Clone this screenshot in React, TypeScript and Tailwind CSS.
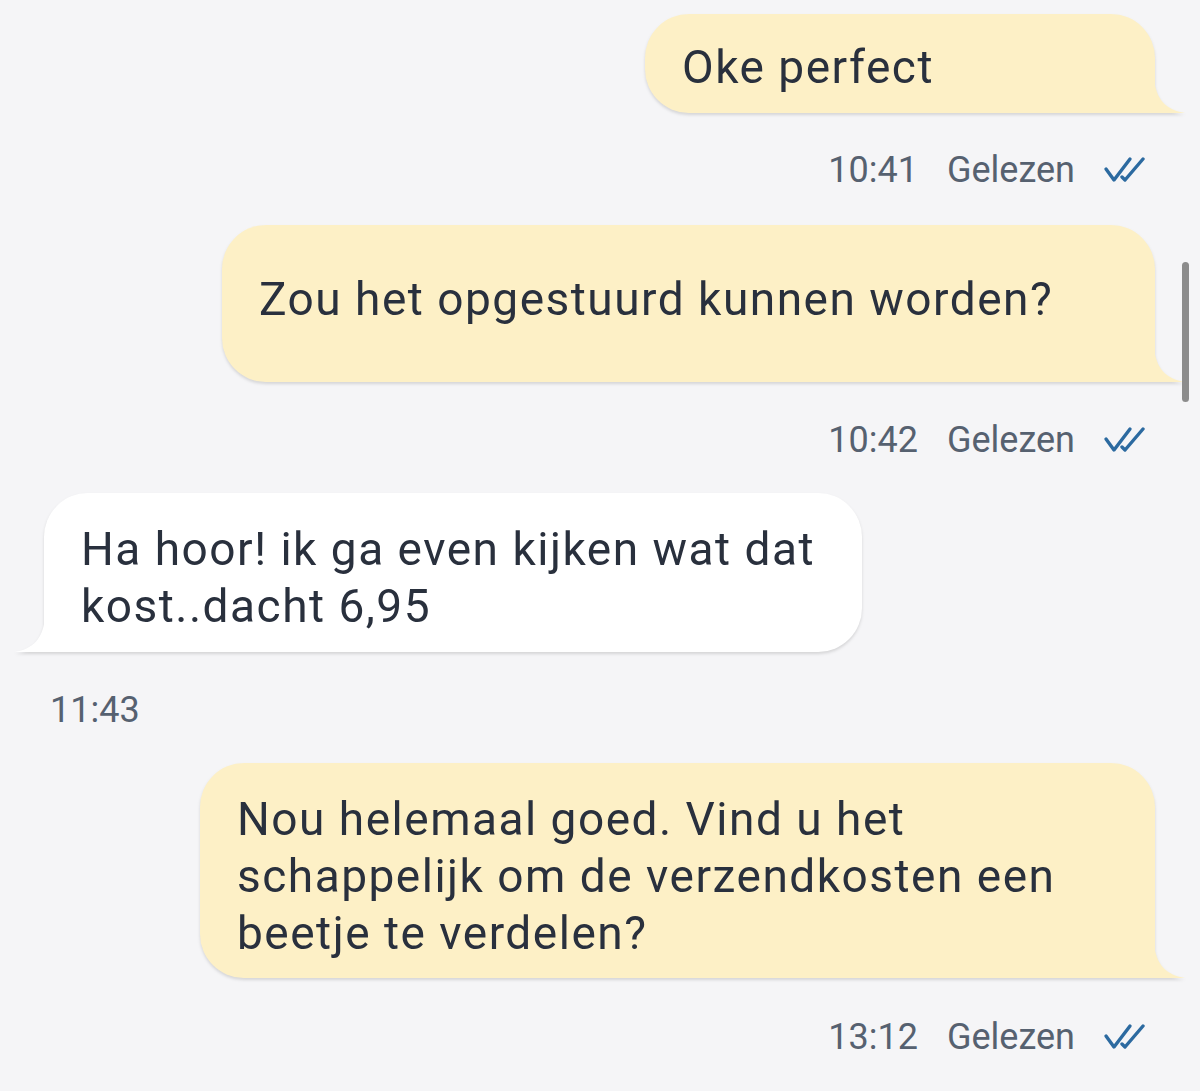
import React from "react";

const Check = () => (
  <svg width="42" height="28" viewBox="0 0 42 28" fill="none" stroke="#2c6aa0" strokeWidth="3.4" strokeLinecap="round" strokeLinejoin="round">
    <path d="M3 13 L11 24 L27 3" />
    <path d="M19 21 L22 24 L40 3" />
  </svg>
);

function Meta({ time, read = true, mt }: { time: string; read?: boolean; mt: string }) {
  return (
    <div className={`flex justify-end items-center pr-[55px] h-[40px] ${mt} text-[36px] leading-[40px] text-[#566170]`}>
      <span>{time}</span>
      {read && <span className="ml-[29px]">Gelezen</span>}
      {read && (
        <span className="ml-[28px] flex items-center">
          <Check />
        </span>
      )}
    </div>
  );
}

function Out({ children, w, pad, mt }: { children: React.ReactNode; w: string; pad: string; mt: string }) {
  return (
    <div className={`flex justify-end pr-[45px] ${mt}`}>
      <div className="relative drop-shadow-[0_2px_1.5px_rgba(0,0,0,0.13)]">
        <div className={`bg-[#fdf0c6] rounded-[44px] rounded-br-none pl-[37px] pr-[20px] ${pad} ${w} text-[46px] leading-[57px] tracking-[1.5px] text-[#29303d]`}>
          {children}
        </div>
        <svg className="absolute bottom-0 right-[-30px]" width="31" height="34" viewBox="0 0 31 34">
          <path d="M0 0 C2 20 12 31 31 34 L0 34 Z" fill="#fdf0c6" />
        </svg>
      </div>
    </div>
  );
}

function In({ children, w, pad, mt }: { children: React.ReactNode; w: string; pad: string; mt: string }) {
  return (
    <div className={`flex justify-start pl-[44px] ${mt}`}>
      <div className="relative drop-shadow-[0_2px_1.5px_rgba(0,0,0,0.13)]">
        <div className={`bg-white rounded-[44px] rounded-bl-none pl-[37px] pr-[20px] ${pad} ${w} text-[46px] leading-[57px] tracking-[1.5px] text-[#29303d]`}>
          {children}
        </div>
        <svg className="absolute bottom-0 left-[-29px]" width="30" height="34" viewBox="0 0 30 34">
          <path d="M30 0 C28 20 18 31 0 34 L30 34 Z" fill="#ffffff" />
        </svg>
      </div>
    </div>
  );
}

export default function App() {
  return (
    <div className="relative w-[1200px] h-[1091px] overflow-hidden bg-[#f5f5f7] font-['Roboto',_sans-serif]">
      <div className="flex flex-col">
        <Out w="w-[510px]" pad="pt-[25px] pb-[17px]" mt="mt-[14px]">
          Oke perfect
        </Out>
        <Meta time="10:41" mt="mt-[37px]" />
        <Out w="w-[933px]" pad="pt-[46px] pb-[54px]" mt="mt-[35px]">
          Zou het opgestuurd kunnen worden?
        </Out>
        <Meta time="10:42" mt="mt-[38px]" />
        <In w="w-[818px]" pad="pt-[28px] pb-[17px]" mt="mt-[33px]">
          Ha hoor! ik ga even kijken wat dat
          <br />
          kost..dacht 6,95
        </In>
        <div className="mt-[38px] h-[40px] pl-[50px] text-[36px] leading-[40px] text-[#566170]">11:43</div>
        <Out w="w-[955px]" pad="pt-[28px] pb-[16px]" mt="mt-[33px]">
          Nou helemaal goed. Vind u het
          <br />
          schappelijk om de verzendkosten een
          <br />
          beetje te verdelen?
        </Out>
        <Meta time="13:12" mt="mt-[39px]" />
      </div>
      <div className="absolute left-[1182px] top-[262px] w-[7px] h-[140px] rounded-full bg-[#8c8c8c]" />
    </div>
  );
}
